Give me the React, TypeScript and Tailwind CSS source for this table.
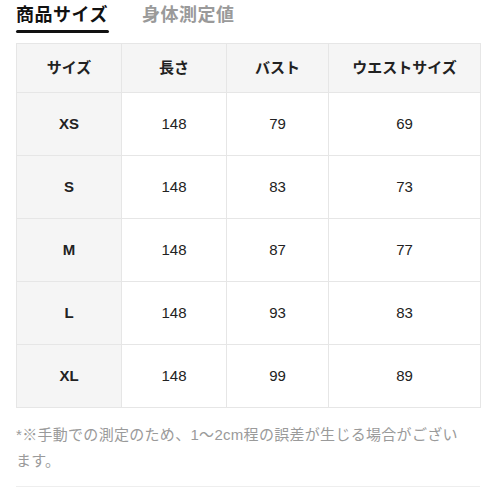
import React from "react";

const rows = [
  ["XS", "148", "79", "69"],
  ["S", "148", "83", "73"],
  ["M", "148", "87", "77"],
  ["L", "148", "93", "83"],
  ["XL", "148", "99", "89"],
];

export default function App() {
  return (
    <div
      className="w-[498px] h-[498px] bg-white pl-4 pr-[18px]"
      style={{ fontFamily: '"Liberation Sans", "Noto Sans CJK JP", sans-serif' }}
    >
      <div className="flex gap-[33px] pt-[3px] h-[43px]">
        <div className="flex flex-col">
          <span className="text-[18px] leading-[24px] font-bold text-[#111] tracking-[0.5px]">商品サイズ</span>
          <span className="mt-[3px] h-[3px] w-[93px] rounded-full bg-[#111]" />
        </div>
        <span className="text-[18px] leading-[24px] font-bold text-[#9a9a9a] tracking-[0.5px]">身体測定値</span>
      </div>
      <table className="w-[464px] border-collapse table-fixed text-[15px] text-[#222]">
        <colgroup>
          <col className="w-[105px]" />
          <col className="w-[105px]" />
          <col className="w-[102px]" />
          <col className="w-[152px]" />
        </colgroup>
        <thead>
          <tr className="h-[49px] bg-[#f5f5f5]">
            {["サイズ", "長さ", "バスト", "ウエストサイズ"].map((h) => (
              <th key={h} className="border border-[#e6e6e6] font-bold text-center">
                {h}
              </th>
            ))}
          </tr>
        </thead>
        <tbody>
          {rows.map((r) => (
            <tr key={r[0]} className="h-[63px]">
              <td className="border border-[#e6e6e6] bg-[#f5f5f5] font-bold text-center">{r[0]}</td>
              <td className="border border-[#e6e6e6] text-center">{r[1]}</td>
              <td className="border border-[#e6e6e6] text-center">{r[2]}</td>
              <td className="border border-[#e6e6e6] text-center">{r[3]}</td>
            </tr>
          ))}
        </tbody>
      </table>
      <p className="mt-[14px] text-[15px] leading-[26px] text-[#9a9a9a] w-[464px] tracking-[0.3px]">
        *※手動での測定のため、1～2cm程の誤差が生じる場合がござい
        <br />
        ます。
      </p>
      <div className="mt-[12px] h-px w-[464px] bg-[#eeeeee]" />
    </div>
  );
}
